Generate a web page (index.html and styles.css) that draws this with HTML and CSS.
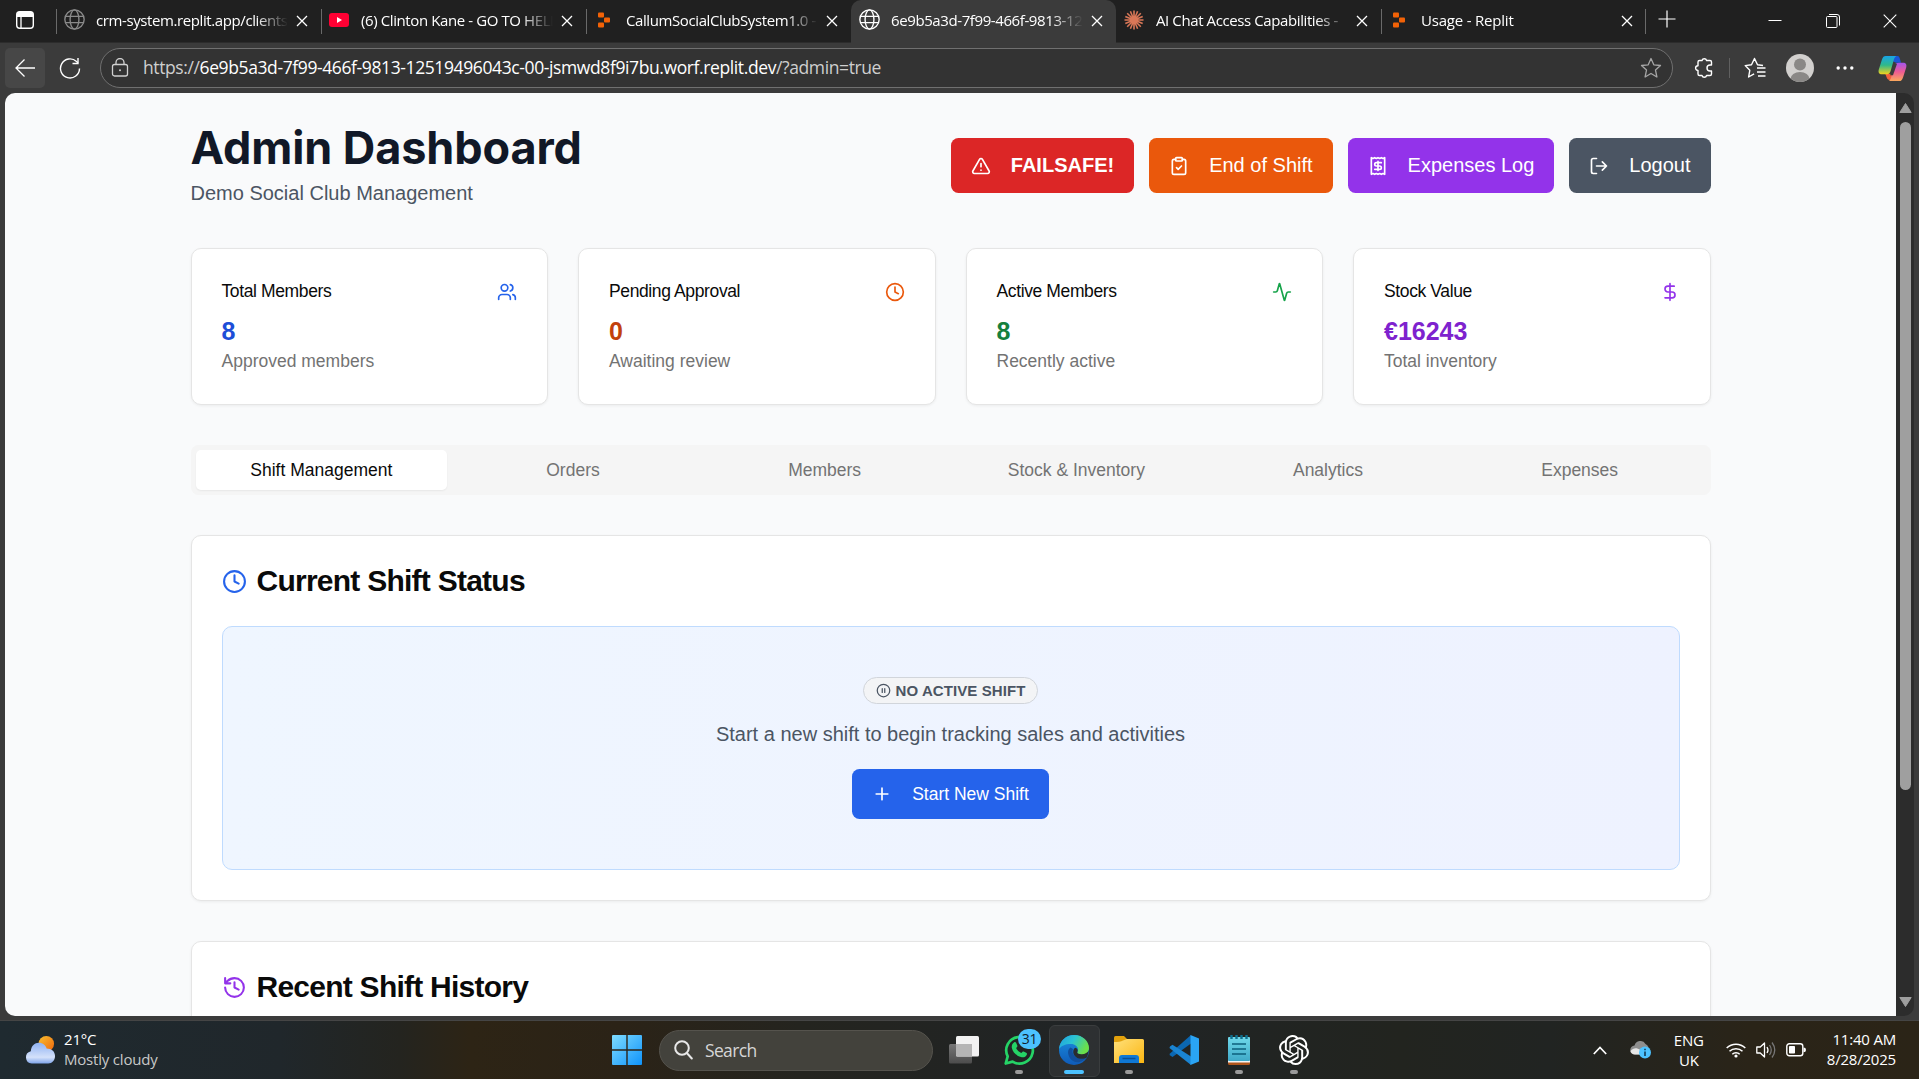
FILE: index.html
```html
<!DOCTYPE html>
<html lang="en">
<head>
<meta charset="utf-8">
<title>Admin Dashboard</title>
<link rel="stylesheet" href="styles.css">
</head>
<body>
<svg class="defs" width="0" height="0">
  <defs>
    <symbol id="globe" viewBox="0 0 20 20"><g fill="none" stroke="currentColor" stroke-width="1.3"><circle cx="10" cy="10" r="9.2"/><ellipse cx="10" cy="10" rx="4.2" ry="9.2"/><path d="M1.6 7h16.8M1.6 13h16.8"/></g></symbol>
    <symbol id="close" viewBox="0 0 12 12"><path d="M1 1l10 10M11 1L1 11" fill="none" stroke="currentColor" stroke-width="1.3"/></symbol>
    <symbol id="replit" viewBox="0 0 14 16"><g fill="#f26207"><rect x="1" y="0.5" width="6" height="5" rx="1"/><rect x="7" y="5.5" width="6" height="5" rx="1"/><rect x="1" y="10.5" width="6" height="5" rx="1"/></g></symbol>
    <symbol id="clock" viewBox="0 0 24 24"><circle cx="12" cy="12" r="10"/><path d="M12 6v6l4 2"/></symbol>
  </defs>
</svg>
<div class="window">
  <header class="tabstrip">
    <div class="tab-actions"><svg width="20" height="20" viewBox="0 0 20 20"><rect x="1.7" y="1.7" width="16.6" height="16.6" rx="3" fill="none" stroke="#fff" stroke-width="1.4"/><path d="M2 4.5a3 3 0 0 1 3-3h10a3 3 0 0 1 3 3V7H2z" fill="#fff"/><path d="M6 7v11" stroke="#fff" stroke-width="1.3"/></svg></div>
    <div class="tab"><svg class="favicon dim" width="21" height="21"><use href="#globe"/></svg><span class="tab-title">crm-system.replit.app/clients</span><svg class="tab-close" width="12" height="12"><use href="#close"/></svg></div>
    <div class="tab"><svg class="favicon" width="20" height="14" viewBox="0 0 20 14"><rect width="20" height="14" rx="3" fill="#ff0033"/><path d="M8 4l5 3-5 3z" fill="#fff"/></svg><span class="tab-title">(6) Clinton Kane - GO TO HELL</span><svg class="tab-close" width="12" height="12"><use href="#close"/></svg></div>
    <div class="tab"><svg class="favicon" width="14" height="16"><use href="#replit"/></svg><span class="tab-title">CallumSocialClubSystem1.0 -</span><svg class="tab-close" width="12" height="12"><use href="#close"/></svg></div>
    <div class="tab active"><svg class="favicon" width="21" height="21"><use href="#globe"/></svg><span class="tab-title">6e9b5a3d-7f99-466f-9813-12</span><svg class="tab-close" width="12" height="12"><use href="#close"/></svg></div>
    <div class="tab"><svg class="favicon" width="20" height="20" viewBox="-10 -10 20 20"><path d="M0-9.500V9.500M-9.500 0H9.500M-6.800-6.800L6.800 6.800M6.800-6.800L-6.800 6.800M-3.600-8.700L3.600 8.700M3.600-8.700L-3.600 8.700M-8.700-3.600L8.700 3.600M8.700-3.600L-8.700 3.600" stroke="#d97757" stroke-width="1.600"/></svg><span class="tab-title">AI Chat Access Capabilities -</span><svg class="tab-close" width="12" height="12"><use href="#close"/></svg></div>
    <div class="tab last"><svg class="favicon" width="14" height="16"><use href="#replit"/></svg><span class="tab-title">Usage - Replit</span><svg class="tab-close" width="12" height="12"><use href="#close"/></svg></div>
    <div class="new-tab"><svg width="18" height="18" viewBox="0 0 18 18"><path d="M9 .5v17M.5 9h17" stroke="#fff" stroke-width="1.2"/></svg></div>
    <div class="window-controls">
      <span><svg width="14" height="14" viewBox="0 0 14 14"><path d="M.5 6.500h13" stroke="#fff"/></svg></span>
      <span><svg width="14" height="14" viewBox="0 0 14 14" fill="none" stroke="#fff"><rect x=".5" y="2.500" width="10.500" height="11" rx="1"/><path d="M3 .5h8a2.500 2.500 0 0 1 2.500 2.500v8.500"/></svg></span>
      <span><svg width="14" height="14" viewBox="0 0 14 14"><path d="M.7.7l12.600 12.600M13.300.7L.7 13.300" stroke="#fff" stroke-width="1.100"/></svg></span>
    </div>
  </header>
  <div class="toolbar">
    <div class="back"><svg width="22" height="20" viewBox="0 0 22 20" fill="none" stroke="#fff" stroke-width="1.300"><path d="M21 10H2M10.500 1.500L2 10l8.500 8.500"/></svg></div>
    <div class="reload"><svg width="22" height="22" viewBox="0 0 22 22" fill="none" stroke="#fff" stroke-width="1.400"><path d="M20.500 11.500A9.500 9.500 0 1 1 17.500 4.500L19 6"/><path d="M19 1v5.500h-5.500"/></svg></div>
    <div class="address">
      <svg width="18" height="20" viewBox="0 0 18 20" fill="none" stroke="#d0d0d0" stroke-width="1.300"><rect x="1.500" y="6.500" width="15" height="11.500" rx="2"/><path d="M5 6.500V4.500a4 4 0 0 1 8 0v2"/><circle cx="9" cy="12.200" r="1" fill="#d0d0d0" stroke="none"/></svg>
      <span class="url"><i>https://</i>6e9b5a3d-7f99-466f-9813-12519496043c-00-jsmwd8f9i7bu.worf.replit.dev<i>/?admin=true</i></span>
      <svg class="star" width="22" height="22" viewBox="0 0 22 22" fill="none" stroke="#a6a6a6" stroke-width="1.300" stroke-linejoin="round"><path d="M11 1.500l2.800 6.300 6.700.7-5 4.600 1.400 6.900-5.900-3.500L5.100 20l1.400-6.900-5-4.600 6.700-.7z"/></svg>
    </div>
    <svg class="ext" width="22" height="22" viewBox="0 0 22 22" fill="none" stroke="#fff" stroke-width="1.400" stroke-linejoin="round"><path d="M6.500 3.500H9a2.400 2.400 0 0 1 4.600 0H17a1.500 1.500 0 0 1 1.500 1.500v3H17a3 3 0 0 0 0 6h1.500v3a1.500 1.500 0 0 1-1.500 1.500h-3.400a2.400 2.400 0 0 1-4.600 0H6.500A1.500 1.500 0 0 1 5 17v-3.500a2.400 2.400 0 0 1 0-4.800V5a1.500 1.500 0 0 1 1.500-1.500z"/></svg>
    <b class="divider"></b>
    <svg class="favs" width="22" height="22" viewBox="0 0 22 22" fill="none" stroke="#fff" stroke-width="1.400" stroke-linejoin="round"><path d="M19 8.500l-5.500-.7L10.500 1.500 7.500 7.800l-6.300.8 4.600 4.700-1.200 6.700 5.500-3.200M13 11h8.500M13 15h8.500M14 19h7.500"/></svg>
    <svg class="avatar" width="28" height="28" viewBox="0 0 28 28"><clipPath id="av"><circle cx="14" cy="14" r="14"/></clipPath><g clip-path="url(#av)"><rect width="28" height="28" fill="#d2d0ce"/><circle cx="14" cy="10.500" r="6" fill="#8a8886"/><ellipse cx="14" cy="25" rx="9.500" ry="7" fill="#8a8886"/></g></svg>
    <svg class="dots" width="18" height="4" viewBox="0 0 18 4" fill="#fff"><circle cx="2.200" cy="2" r="1.700"/><circle cx="9" cy="2" r="1.700"/><circle cx="15.800" cy="2" r="1.700"/></svg>
    <svg class="copilot" width="29" height="27" viewBox="0 0 30 28"><defs><linearGradient id="cpa" x1="0" y1="0" x2="0" y2="1"><stop offset="0" stop-color="#18a4e8"/><stop offset=".5" stop-color="#2fb98a"/><stop offset="1" stop-color="#f4d31c"/></linearGradient><linearGradient id="cpb" x1="0" y1="0" x2="0" y2="1"><stop offset="0" stop-color="#a254ee"/><stop offset=".5" stop-color="#ee5b93"/><stop offset="1" stop-color="#fba95c"/></linearGradient></defs><path d="M14 1h6c2 0 2.500 2 3 4l.8 3h-5L14 6z" fill="#1a56d6"/><path d="M7 19l9 1 1-3 3 9H12c-3 0-3-4-5-7z" fill="#f2603c"/><path d="M8 1h11c-2 1-2.500 3-3.200 6l-2.600 9c-.8 3-2 4-5 4H4c-3 0-4-2-3.200-5L4 5c1-3 2-4 4-4z" fill="url(#cpa)"/><path d="M22 27H11c2-1 2.500-3 3.200-6l2.600-9c.8-3 2-4 5-4H26c3 0 4 2 3.200 5L26 23c-1 3-2 4-4 4z" fill="url(#cpb)"/><path d="M16.500 9h3.200l-4.200 12h-3z" fill="#3b3b3b"/></svg>
  </div>
  <div class="viewport">
    <div class="page">
      <main class="container">
        <div class="header">
          <div>
            <h1>Admin Dashboard</h1>
            <p class="subtitle">Demo Social Club Management</p>
          </div>
          <div class="actions">
            <button class="btn red"><svg class="lu" viewBox="0 0 24 24"><path d="m21.730 18-8-14a2 2 0 0 0-3.480 0l-8 14A2 2 0 0 0 4 21h16a2 2 0 0 0 1.730-3M12 9v4M12 17h.01"/></svg>FAILSAFE!</button>
            <button class="btn orange"><svg class="lu" viewBox="0 0 24 24"><rect x="8" y="2" width="8" height="4" rx="1"/><path d="M16 4h2a2 2 0 0 1 2 2v14a2 2 0 0 1-2 2H6a2 2 0 0 1-2-2V6a2 2 0 0 1 2-2h2M9 14l2 2 4-4"/></svg>End of Shift</button>
            <button class="btn purple"><svg class="lu" viewBox="0 0 24 24"><path d="M4 2v20l2-1 2 1 2-1 2 1 2-1 2 1 2-1 2 1V2l-2 1-2-1-2 1-2-1-2 1-2-1-2 1ZM16 8h-6a2 2 0 1 0 0 4h4a2 2 0 1 1 0 4H8M12 17.500v-11"/></svg>Expenses Log</button>
            <button class="btn slate"><svg class="lu" viewBox="0 0 24 24"><path d="M9 21H5a2 2 0 0 1-2-2V5a2 2 0 0 1 2-2h4M16 17l5-5-5-5M21 12H9"/></svg>Logout</button>
          </div>
        </div>
        <div class="stats">
          <section class="card stat blue-t"><div class="stat-head">Total Members<svg class="lu" viewBox="0 0 24 24"><path d="M16 21v-2a4 4 0 0 0-4-4H6a4 4 0 0 0-4 4v2M22 21v-2a4 4 0 0 0-3-3.870M16 3.130a4 4 0 0 1 0 7.750"/><circle cx="9" cy="7" r="4"/></svg></div><div class="value">8</div><p>Approved members</p></section>
          <section class="card stat orange-t"><div class="stat-head">Pending Approval<svg class="lu"><use href="#clock"/></svg></div><div class="value">0</div><p>Awaiting review</p></section>
          <section class="card stat green-t"><div class="stat-head">Active Members<svg class="lu" viewBox="0 0 24 24"><path d="M22 12h-2.480a2 2 0 0 0-1.930 1.460l-2.350 8.360a.25.25 0 0 1-.48 0L9.240 2.180a.25.25 0 0 0-.48 0l-2.350 8.360A2 2 0 0 1 4.490 12H2"/></svg></div><div class="value">8</div><p>Recently active</p></section>
          <section class="card stat purple-t"><div class="stat-head">Stock Value<svg class="lu" viewBox="0 0 24 24"><path d="M12 2v20M17 5H9.500a3.500 3.500 0 0 0 0 7h5a3.500 3.500 0 0 1 0 7H6"/></svg></div><div class="value">€16243</div><p>Total inventory</p></section>
        </div>
        <nav class="tabs"><a class="on">Shift Management</a><a>Orders</a><a>Members</a><a>Stock &amp; Inventory</a><a>Analytics</a><a>Expenses</a></nav>
        <section class="card block">
          <h2><svg class="lu blue-i"><use href="#clock"/></svg>Current Shift Status</h2>
          <div class="shift">
            <div class="badge"><svg class="lu" viewBox="0 0 24 24"><circle cx="12" cy="12" r="10"/><path d="M10 15V9M14 15V9"/></svg>NO ACTIVE SHIFT</div>
            <p>Start a new shift to begin tracking sales and activities</p>
            <button class="start"><svg class="lu" viewBox="0 0 24 24"><path d="M5 12h14M12 5v14"/></svg>Start New Shift</button>
          </div>
        </section>
        <section class="card block">
          <h2><svg class="lu purple-i" viewBox="0 0 24 24"><path d="M3 12a9 9 0 1 0 9-9 9.750 9.750 0 0 0-6.740 2.740L3 8M3 3v5h5M12 7v5l4 2"/></svg>Recent Shift History</h2>
        </section>
      </main>
    </div>
    <div class="scrollbar"><svg width="13" height="10" viewBox="0 0 13 10"><path d="M6.500.5l5.700 9H.8z" fill="#9f9f9f" stroke="#9f9f9f" stroke-linejoin="round"/></svg><div class="thumb"></div><svg width="13" height="10" viewBox="0 0 13 10"><path d="M6.500 9.500L.8.500h11.400z" fill="#9f9f9f" stroke="#9f9f9f" stroke-linejoin="round"/></svg></div>
  </div>
</div>
<footer class="taskbar">
  <div class="weather">
    <svg width="31" height="30" viewBox="0 0 32 30"><defs><linearGradient id="sun" x1="0" y1="0" x2="1" y2="1"><stop offset="0" stop-color="#f8c030"/><stop offset="1" stop-color="#f0660c"/></linearGradient><linearGradient id="cl" x1="0" y1="0" x2="0" y2="1"><stop offset="0" stop-color="#8fb2f2"/><stop offset=".7" stop-color="#d4e1fa"/><stop offset="1" stop-color="#7ea4ea"/></linearGradient></defs><circle cx="22" cy="8.500" r="8" fill="url(#sun)"/><path d="M7 29a6.500 6.500 0 0 1-1-12.800C6.500 10.500 10 7.500 14.300 7.500c4.200 0 7 2.600 8 6 5 0 8.700 3 8.700 7.800 0 4.500-3 7.700-7 7.700z" fill="url(#cl)"/></svg>
    <div class="forecast"><div>21°C</div><div class="muted">Mostly cloudy</div></div>
  </div>
  <div class="apps">
    <svg width="30" height="30" viewBox="0 0 30 30"><defs><linearGradient id="win" x1="0" y1="0" x2="1" y2="1"><stop offset="0" stop-color="#7fdcff"/><stop offset="1" stop-color="#0f93fa"/></linearGradient></defs><path d="M0 1q0-1 1-1h13.300v14.300H0zM15.700 0H29q1 0 1 1v13.300H15.700zM0 15.700h14.300V30H1q-1 0-1-1zM15.700 15.700H30V29q0 1-1 1H15.700z" fill="url(#win)"/></svg>
    <div class="search"><svg width="19" height="20" viewBox="0 0 19 20" fill="none" stroke="#e8e8e8" stroke-width="2"><circle cx="8" cy="8" r="6.800"/><path d="M12.800 13l5 5.500" stroke-linecap="round"/></svg>Search</div>
    <div class="app"><svg width="30" height="28" viewBox="0 0 30 28"><defs><linearGradient id="tv" x1="0" y1="0" x2="0" y2="1"><stop offset="0" stop-color="#777"/><stop offset="1" stop-color="#4c4c4c"/></linearGradient></defs><rect x="0" y="8" width="23" height="19.500" rx="1.500" fill="url(#tv)"/><rect x="7" y="0" width="23" height="20.500" rx="1.500" fill="#f2f2f2"/><path d="M7 8h16v12.500H8.500Q7 20.500 7 19z" fill="#b5b5b5"/></svg></div>
    <div class="app run"><svg width="32" height="32" viewBox="0 0 32 32"><path d="M2.700 29.500l2-7.200A13.300 13.300 0 1 1 9.600 27.600z" fill="none" stroke="#25d366" stroke-width="2.700" stroke-linejoin="round"/><path d="M11 8.500c.8-.8 1.800-.5 2.200.5l1.100 2.500c.3.800-.2 1.400-1.200 2.500 1 2.300 2.800 4 5.200 5 1-1.200 1.600-1.800 2.300-1.500l2.600 1.200c.9.500.9 1.100.6 2-.8 2-3 3-5 2.500-5.500-1.200-9-5-10-9.500-.3-2 .6-4.200 2.200-5.200z" fill="#25d366"/></svg><span class="count">31</span></div>
    <div class="app run focus"><svg width="30" height="30" viewBox="0 0 30 30"><defs><linearGradient id="e1" x1="0" y1="0" x2="1" y2=".4"><stop offset="0" stop-color="#1f9fe0"/><stop offset=".5" stop-color="#2bc3d2"/><stop offset="1" stop-color="#6bdf4a"/></linearGradient><linearGradient id="e2" x1="0" y1="0" x2="0" y2="1"><stop offset="0" stop-color="#1b8fe0"/><stop offset="1" stop-color="#0f5bb8"/></linearGradient></defs><circle cx="15" cy="15" r="15" fill="url(#e2)"/><path d="M0 14C1 5 7.500 0 15 0c9 0 15 6.500 15 13 0 4.500-3.500 7-7.500 7-3 0-4.500-1-4.500-2 0-.8 1-1.300 1-3.300 0-3.200-3-5.700-7-5.700C6 9 2 11 0 14z" fill="url(#e1)"/><path d="M11.500 12.500C9 14 8.500 17 9.500 20c1.500 5 6 8 11 7 2.500-.5 5-2 7-4.500-4 2-9 1.500-12-1.500-2-2-2.500-5-1.500-7z" fill="#124f9c"/><path d="M28.200 22.200c-3 2-7.800 2.300-11 0-2.500-1.800-3.500-4.500-2.800-7 .3-1.200 1-2 1.800-2.500 2 .5 3 2 2.300 3.800-.8 1.700.7 2.700 4.200 2.700 3.400 0 6.200-1.700 7.300-4.200z" fill="#292c2f"/></svg></div>
    <div class="app run"><svg width="30" height="27" viewBox="0 0 30 27"><defs><linearGradient id="fo" x1="0" y1="0" x2="1" y2="1"><stop offset="0" stop-color="#ffe07a"/><stop offset="1" stop-color="#fbb612"/></linearGradient></defs><path d="M0 1.500Q0 0 1.500 0H10l3.500 3.500V8H0z" fill="#e2a10c"/><path d="M0 6q6 0 9-1.500L13 3h15.500Q30 3 30 4.500V27H0z" fill="url(#fo)"/><path d="M5 27v-5q0-3 3-3h14q3 0 3 3v5z" fill="#0f78d4"/><path d="M8.500 22.500h13" stroke="#0a4f94" stroke-width="1.500"/></svg></div>
    <div class="app"><svg width="30" height="30" viewBox="0 0 30 30"><path d="M1 18.500L22 0v8.500L3.500 22 .5 20z" fill="#0b67b2"/><path d="M1 11.500l2.500-1.800L22 21.500V30L.5 13z" fill="#1a84d2"/><path d="M21.500 0L30 3.500v23L21.500 30z" fill="#2aa4f4"/></svg></div>
    <div class="app run"><svg width="22" height="30" viewBox="0 0 22 30"><defs><linearGradient id="np" x1="0" y1="0" x2="0" y2="1"><stop offset="0" stop-color="#6fd8ea"/><stop offset="1" stop-color="#3fa9c8"/></linearGradient></defs><rect y="26" width="22" height="4" rx="1.500" fill="#b0561c"/><rect y="20" width="22" height="7.500" fill="#f4f4f4"/><rect y="2" width="22" height="24" rx="1" fill="url(#np)"/><path d="M4 9h14M4 14h14M4 19h14" stroke="#0c5f7c" stroke-width="1.700"/><path d="M3.500 0v4M8.500 0v4M13.500 0v4M18.500 0v4" stroke="#0f6f8e" stroke-width="2.400"/></svg></div>
    <div class="app run"><svg width="30" height="30" viewBox="0 0 24 24"><path fill="#fff" d="M22.282 9.821a5.985 5.985 0 0 0-.516-4.910 6.046 6.046 0 0 0-6.510-2.900A6.065 6.065 0 0 0 4.981 4.182a5.985 5.985 0 0 0-3.998 2.900 6.046 6.046 0 0 0 .743 7.097 5.980 5.980 0 0 0 .510 4.911 6.051 6.051 0 0 0 6.515 2.900A5.985 5.985 0 0 0 13.260 24a6.056 6.056 0 0 0 5.772-4.206 5.990 5.990 0 0 0 3.997-2.900 6.056 6.056 0 0 0-.747-7.073zM13.260 22.430a4.476 4.476 0 0 1-2.876-1.040l.141-.081 4.779-2.758a.795.795 0 0 0 .392-.681v-6.737l2.020 1.168a.071.071 0 0 1 .038.052v5.583a4.504 4.504 0 0 1-4.494 4.494zM3.600 18.304a4.470 4.470 0 0 1-.535-3.014l.142.085 4.783 2.759a.771.771 0 0 0 .780 0l5.843-3.369v2.332a.080.080 0 0 1-.033.062L9.740 19.950a4.500 4.500 0 0 1-6.140-1.646zM2.340 7.896a4.485 4.485 0 0 1 2.366-1.973V11.600a.766.766 0 0 0 .388.676l5.815 3.355-2.020 1.168a.076.076 0 0 1-.071 0l-4.830-2.786A4.504 4.504 0 0 1 2.340 7.872zm16.597 3.855l-5.833-3.387L15.119 7.200a.076.076 0 0 1 .071 0l4.830 2.791a4.494 4.494 0 0 1-.676 8.105v-5.678a.790.790 0 0 0-.407-.667zm2.010-3.023l-.141-.085-4.774-2.782a.776.776 0 0 0-.785 0L9.409 9.230V6.897a.066.066 0 0 1 .028-.061l4.830-2.787a4.500 4.500 0 0 1 6.680 4.660zm-12.640 4.135l-2.020-1.164a.080.080 0 0 1-.038-.057V6.075a4.500 4.500 0 0 1 7.375-3.453l-.142.080L8.704 5.460a.795.795 0 0 0-.393.681zm1.097-2.365l2.602-1.500 2.607 1.500v2.999l-2.597 1.500-2.607-1.500z"/></svg></div>
  </div>
  <div class="tray">
    <svg width="14" height="9" viewBox="0 0 14 9" fill="none" stroke="#fff" stroke-width="1.700"><path d="M.8 8L7 1.500 13.200 8"/></svg>
    <svg class="cloud" width="22" height="18" viewBox="0 0 22 18"><path d="M5 13.500a4.500 4.500 0 0 1-.5-9A6 6 0 0 1 15.500 3a5.500 5.500 0 0 1 3 7L11 13.500z" fill="#8e8e8e"/><path d="M5 13.500c-3 0-4.500-2-4.500-3.500 3-3.500 6-3.500 10-1l1 4.500z" fill="#e6e6e6"/><circle cx="15" cy="11.500" r="6" fill="#4cc2ff"/><path d="M15 10.500v4.500M15 7.800v1.500" stroke="#10324a" stroke-width="1.500"/></svg>
    <div class="lang">ENG<br>UK</div>
    <svg class="wifi" width="20" height="16" viewBox="0 0 20 16" fill="none" stroke="#fff" stroke-width="1.500"><path d="M.7 6a13.200 13.200 0 0 1 18.600 0M3.500 9.300a9.300 9.300 0 0 1 13 0M6.300 12.300a5.300 5.300 0 0 1 7.400 0"/><circle cx="10" cy="14" r="1.600" fill="#fff" stroke="none"/></svg>
    <svg class="vol" width="20" height="18" viewBox="0 0 20 18" fill="none" stroke="#fff" stroke-width="1.300" stroke-linejoin="round"><path d="M.8 6h3.500l4.200-4v14l-4.200-4H.8z"/><path d="M11 6q2 3 0 6"/><path d="M13.500 4q3.500 5 0 10M16 1.500q5.500 7.500 0 15" stroke="#777"/></svg>
    <svg class="bat" width="20" height="14" viewBox="0 0 20 14"><rect x=".8" y=".8" width="16" height="12" rx="2.500" fill="none" stroke="#fff" stroke-width="1.400"/><rect x="3" y="3" width="6" height="7.600" rx=".8" fill="#fff"/><path d="M17.500 4.500q2.500 0 2.500 2.400t-2.500 2.400z" fill="#fff"/></svg>
    <div class="time">11:40 AM<br>8/28/2025</div>
  </div>
</footer>
</body>
</html>
```
FILE: styles.css
```css
* { box-sizing: border-box; margin: 0; }
body { width: 1919px; height: 1079px; overflow: hidden; background: #3b3b3b; font-family: "Liberation Sans", Arial, sans-serif; color: #0a0a0a; display: flex; flex-direction: column; }
svg { display: block; flex: none; }
.defs { position: absolute; }
.window { height: 1021px; display: flex; flex-direction: column; border-bottom: 1px solid #454545; }
.tabstrip, .toolbar, .taskbar { font-family: "Open Sans", "Noto Sans", sans-serif; color: #fff; }

/* Browser tabs */
.tabstrip { height: 43px; background: #202020; display: flex; font-size: 15px; letter-spacing: -0.4px; border-bottom: 1px solid #2c2c2c; }
.tab-actions { width: 56px; padding: 10px 0 0 15px; }
.tab { position: relative; width: 265px; height: 43px; padding: 0 14px 4px 0; display: grid; grid-template-columns: 36px 196px 1fr; column-gap: 4px; align-items: center; }
.tab::before { content: ""; position: absolute; left: 0; top: 9px; width: 1px; height: 25px; background: #6a6a6a; }
.tab.active { background: #3b3b3b; border-radius: 10px 10px 0 0; }
.tab.active::before, .tab.active + .tab::before { display: none; }
.tab.last .tab-title { letter-spacing: -0.2px; }
.favicon { justify-self: center; }
.favicon.dim { color: #8a8a8a; }
.tab-title { white-space: nowrap; overflow: hidden; width: 192px; line-height: 22px; -webkit-mask-image: linear-gradient(90deg, #000 160px, transparent 192px); mask-image: linear-gradient(90deg, #000 160px, transparent 192px); }
.tab-close { justify-self: center; margin-top: 2px; }
.new-tab { position: relative; width: 44px; padding: 10px 0 0 12px; }
.new-tab::before { content: ""; position: absolute; left: -1px; top: 9px; width: 1px; height: 25px; background: #6a6a6a; }
.window-controls { margin-left: auto; display: flex; }
.window-controls span { width: 57.5px; display: grid; place-items: center; }

/* Browser toolbar */
.toolbar { height: 50px; background: #3b3b3b; display: flex; align-items: center; padding-left: 5px; }
.back { width: 40px; height: 40px; border-radius: 5px; background: #474747; display: grid; place-items: center; }
.reload { width: 50px; display: grid; place-items: center; }
.address { margin-left: 5px; width: 1573px; height: 40px; border: 1px solid #707070; border-radius: 20px; background: #333; display: flex; align-items: center; padding: 0 10px; font-size: 17.5px; }
.url { margin-left: 14px; padding-bottom: 2px; white-space: nowrap; letter-spacing: -0.391px; }
.url i { font-style: normal; color: #cfcfcf; }
.star { margin-left: auto; }
.ext { margin-left: 20px; }
.divider { width: 1px; height: 20px; margin-left: 14px; background: #606060; }
.favs { margin-left: 14px; }
.avatar { margin-left: 20px; }
.dots { margin-left: 22px; }
.copilot { margin-left: 24px; }

/* Page viewport */
.viewport { height: 923px; margin: 0 5px; display: flex; border-radius: 10px; overflow: hidden; }
.page { width: 1891px; background: #f9fafb; overflow: hidden; }
.scrollbar { flex: 1; background: #2c2c2c; display: flex; flex-direction: column; align-items: center; padding: 10px 0 9px; }
.thumb { width: 11px; height: 668px; border-radius: 6px; background: #9f9f9f; margin: 9px 0 auto; }

.container { width: 1520px; margin: 0 auto; padding-top: 30px; }
.header { display: flex; justify-content: space-between; align-items: center; height: 85px; }
h1 { font: 700 45px/50px Inter, sans-serif; letter-spacing: -0.1px; color: #111827; white-space: nowrap; }
.subtitle { font-size: 20px; line-height: 30px; margin-top: 5px; color: #4b5563; }
.actions { display: flex; gap: 15px; }
.lu { width: 20px; height: 20px; fill: none; stroke: currentColor; stroke-width: 2; stroke-linecap: round; stroke-linejoin: round; }
.btn, .start { border: 0; border-radius: 7.5px; color: #fff; display: flex; align-items: center; gap: 20px; font-family: inherit; white-space: nowrap; }
.btn { height: 55px; padding: 0 20px; font-size: 20px; }
.red { background: #dc2626; font-weight: 700; }
.orange { background: #ea580c; }
.purple { background: #9333ea; }
.slate { background: #4b5563; }

/* Cards */
.card { background: #fff; border: 1px solid #e5e5e5; border-radius: 10px; box-shadow: 0 1px 3px rgba(0,0,0,.06); padding: 30px; }
.stats { display: grid; grid-template-columns: repeat(4, 1fr); gap: 30px; margin-top: 40px; }
.stat { height: 157px; font-size: 17.5px; line-height: 25px; }
.stat-head { display: flex; justify-content: space-between; align-items: center; margin-bottom: 10px; letter-spacing: -0.38px; }
.stat p { color: #737373; }
.value { font-size: 25px; line-height: 35px; font-weight: 700; }
.blue-t .value { color: #1d4ed8; } .blue-t svg, .blue-i { color: #2563eb; }
.orange-t .value { color: #c2410c; } .orange-t svg { color: #ea580c; }
.green-t .value { color: #15803d; } .green-t svg { color: #16a34a; }
.purple-t .value { color: #7e22ce; } .purple-t svg, .purple-i { color: #9333ea; }

.tabs { margin: 40px 0; height: 50px; padding: 5px; border-radius: 7.5px; background: #f5f5f5; display: grid; grid-template-columns: repeat(6, 1fr); font-size: 17.5px; color: #737373; }
.tabs a { display: grid; place-items: center; border-radius: 5px; }
.tabs .on { background: #fff; color: #0a0a0a; box-shadow: 0 1px 2px rgba(0,0,0,.06); }

.block + .block { margin-top: 40px; }
h2 { display: flex; align-items: center; gap: 10px; height: 30px; font-size: 30px; line-height: 30px; font-weight: 700; letter-spacing: -0.75px; white-space: nowrap; }
h2 .lu { width: 25px; height: 25px; }
.shift { margin-top: 30px; height: 244px; border: 1px solid #bfdbfe; border-radius: 10px; background: linear-gradient(90deg, #eff6ff, #eef2ff); display: flex; flex-direction: column; align-items: center; padding-top: 50px; }
.badge { height: 27px; border: 1px solid #d1d5db; border-radius: 14px; background: #f3f4f6; color: #4b5563; display: flex; align-items: center; gap: 5px; padding: 0 12px; font-size: 15px; font-weight: 700; letter-spacing: 0.08px; }
.badge .lu { width: 15px; height: 15px; }
.shift p { margin: 15px 0 20px; font-size: 20px; line-height: 30px; color: #4b5563; }
.start { height: 50px; padding: 0 20px; background: #2563eb; font-size: 17.5px; }

/* Taskbar */
.taskbar { height: 58px; background: linear-gradient(90deg, #1f2a30 0, #20272b 280px, #24241f 400px, #2d2415 470px, #2b2317 620px, #24241f 800px, #202426 1100px, #22241f 1400px, #212422 1550px, #2a2418 1750px, #2b2417 1919px); display: flex; font-size: 15px; line-height: 20px; letter-spacing: -0.2px; }
.weather { width: 612px; padding-left: 25px; display: flex; gap: 8px; align-items: center; }
.forecast { padding-bottom: 2px; }
.muted { color: #c8c8c8; }
.apps { display: flex; align-items: center; }
.search { width: 274px; height: 41px; margin: 0 3px 0 17px; border-radius: 21px; border: 1px solid #55534d; background: #43423c; display: flex; align-items: center; gap: 12px; padding-left: 14px; font-size: 17.5px; letter-spacing: -0.65px; color: #d6d6d6; }
.app { position: relative; width: 55px; height: 58px; display: grid; place-items: center; padding-bottom: 1px; }
.app.run::after { content: ""; position: absolute; bottom: 5px; left: 24px; width: 8px; height: 4px; border-radius: 2px; background: #9a9a9a; }
.app.focus::before { content: ""; position: absolute; left: 3px; top: 4px; width: 49px; height: 50px; border: 1px solid #3a3d3e; border-radius: 6px; background: rgba(255,255,255,.06); }
.app.focus svg { position: relative; }
.app.focus::after { left: 18px; width: 20px; background: #4cc2ff; }
.count { position: absolute; left: 27px; top: 8px; width: 23px; height: 20px; border-radius: 10px; background: #4cc2ff; color: #10202c; font-size: 14px; text-align: center; }
.tray { margin-left: auto; padding-right: 23px; display: flex; align-items: center; }
.cloud { margin-left: 23px; }
.lang { text-align: center; margin-left: 22px; }
.wifi { margin-left: 22px; }
.vol { margin-left: 10px; }
.bat { margin-left: 10px; }
.time { text-align: right; margin-left: 21px; padding-bottom: 2px; white-space: nowrap; }
```
